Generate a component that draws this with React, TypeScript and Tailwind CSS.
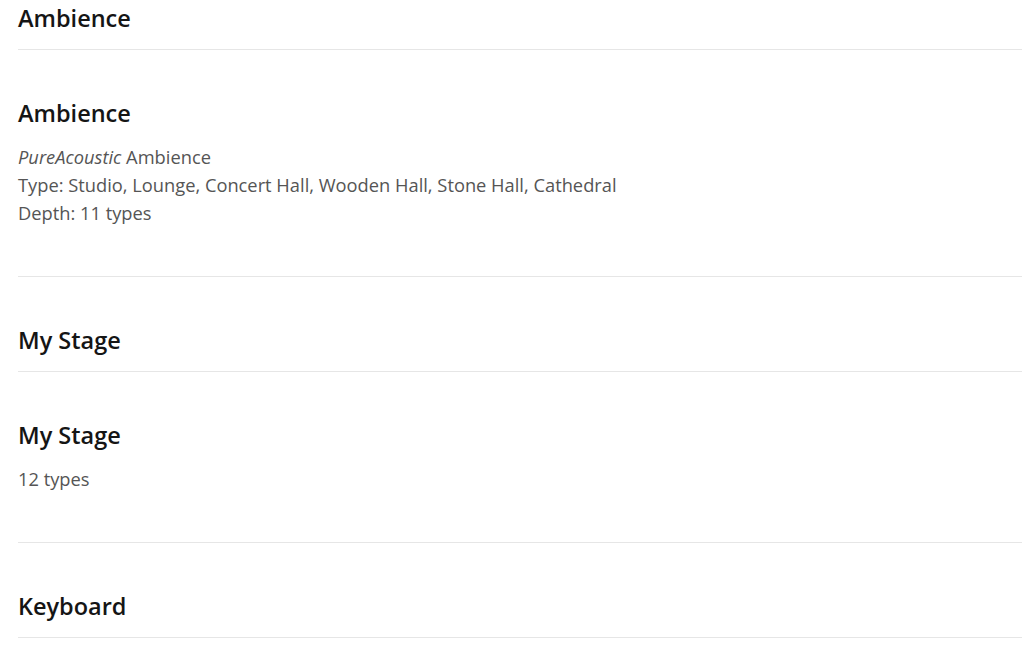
const sections = [
  {
    title: "Ambience",
    lines: [
      <>
        <i>PureAcoustic</i> Ambience
      </>,
      <>Type: Studio, Lounge, Concert Hall, Wooden Hall, Stone Hall, Cathedral</>,
      <>Depth: 11 types</>,
    ],
  },
  {
    title: "My Stage",
    lines: [<>12 types</>],
  },
];

function SectionHeader({ title, first }: { title: string; first?: boolean }) {
  return (
    <h2
      className={`${first ? "pt-[4px]" : "pt-[49px]"} pb-[17px] border-b border-[#e6e6e6] text-[23.5px] leading-[28px] font-semibold text-[#151515]`}
    >
      {title}
    </h2>
  );
}

export default function App() {
  return (
    <div className="min-h-screen bg-white pl-[18px] pr-[2px] font-['Open_Sans','Noto_Sans',sans-serif]">
      {sections.map((s, i) => (
        <section key={s.title}>
          <SectionHeader title={s.title} first={i === 0} />
          <div className="pt-[49px] pb-[49px] border-b border-[#e6e6e6]">
            <h3 className="text-[23.5px] leading-[28px] font-semibold text-[#151515]">{s.title}</h3>
            <div className="mt-4 text-[18.3px] leading-[28px] text-[#555555]">
              {s.lines.map((l, j) => (
                <p key={j}>{l}</p>
              ))}
            </div>
          </div>
        </section>
      ))}
      <SectionHeader title="Keyboard" />
    </div>
  );
}
